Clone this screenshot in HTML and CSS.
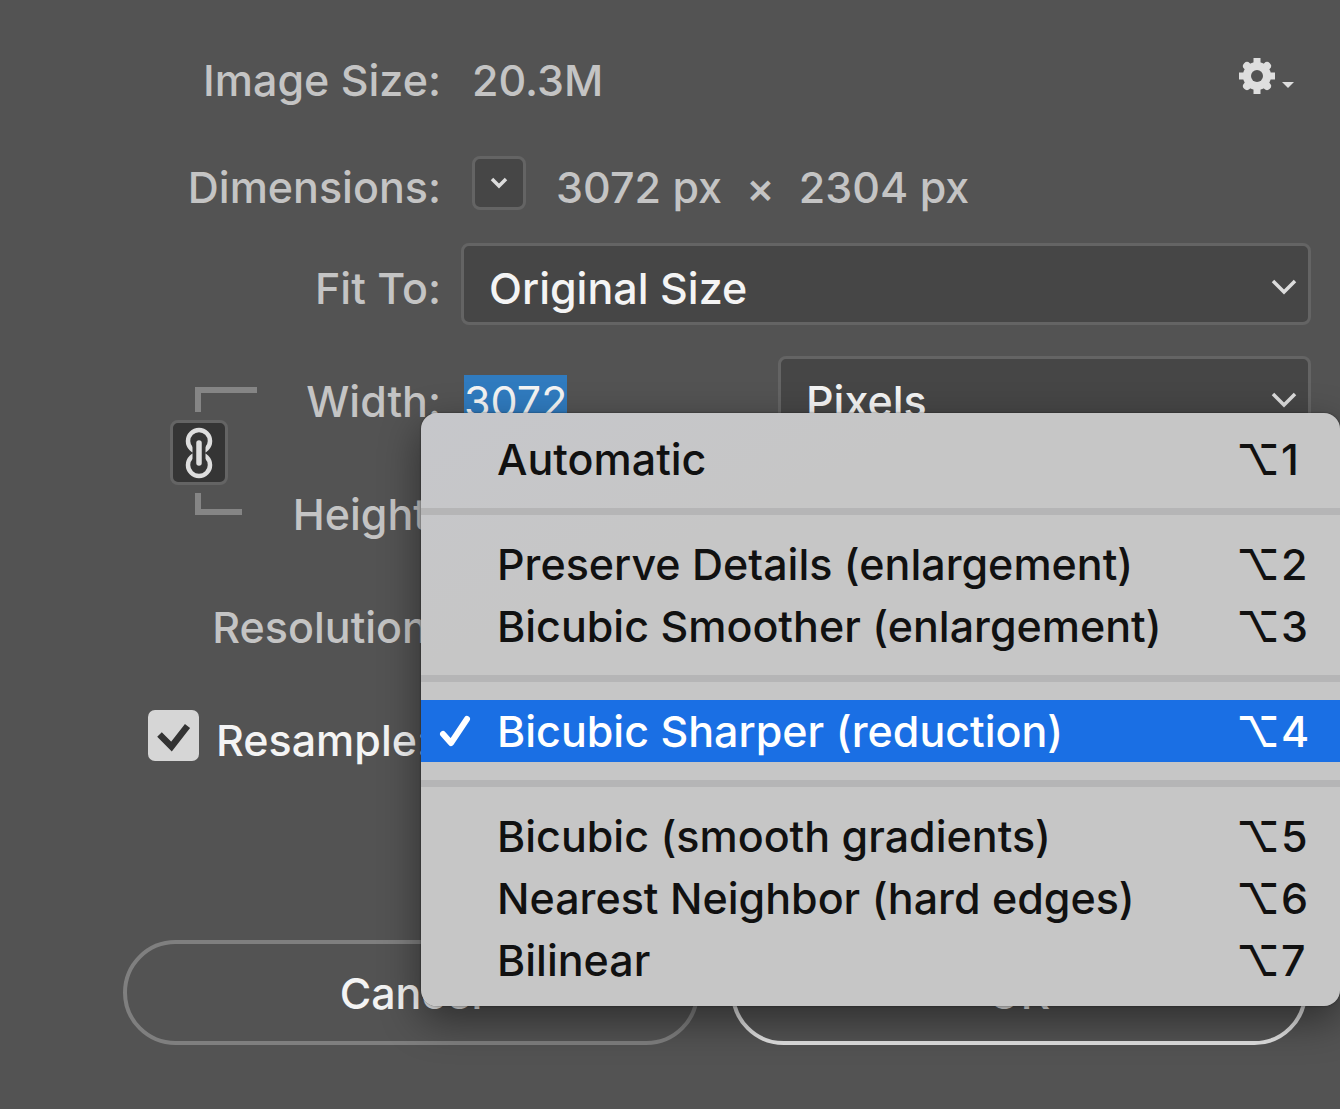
FILE: index.html
```html
<!DOCTYPE html>
<html lang="en">

<head>
    <meta charset="UTF-8">
    <meta name="viewport" content="width=device-width, initial-scale=1.0">
    <title>Image Size</title>
    <link rel="stylesheet" href="styles.css">
    <script src="script.js" defer></script>
</head>

<body>
    <form class="dialog">
        <div class="fields">
            <span class="label">Image Size:</span>
            <div class="control info">
                <span class="value">20.3M</span>
                <button type="button" class="settings" aria-label="Settings">
                    <svg class="gear" viewBox="0 0 38 38" aria-hidden="true">
                        <g stroke="#dedede" stroke-width="7">
                            <path d="M19 1v36M1 19h36" />
                            <path d="M9 9l20 20M29 9L9 29" stroke-width="8" stroke-linecap="round" />
                        </g>
                        <circle cx="19" cy="19" r="14" fill="#dedede" />
                        <circle cx="19" cy="19" r="6" fill="#535353" />
                    </svg>
                    <svg class="arrow" viewBox="0 0 12 6" aria-hidden="true">
                        <path d="M0 0h12L6 6z" fill="#dedede" />
                    </svg>
                </button>
            </div>

            <span class="label">Dimensions:</span>
            <div class="control info">
                <button type="button" class="dimension-unit" aria-label="Dimension units">
                    <svg viewBox="0 0 18 12" aria-hidden="true">
                        <path d="M2 2l7 7 7-7" fill="none" stroke="#dcdcdc" stroke-width="3.500" />
                    </svg>
                </button>
                <span class="value size">3072 px</span>
                <span class="value times">×</span>
                <span class="value">2304 px</span>
            </div>

            <label class="label" for="fit">Fit To:</label>
            <div class="control">
                <div class="select">
                    <select id="fit">
                        <option>Original Size</option>
                    </select>
                    <svg viewBox="0 0 26 16" aria-hidden="true">
                        <path d="M2 2l11 11L24 2" fill="none" stroke="#dcdcdc" stroke-width="3.500" />
                    </svg>
                </div>
            </div>

            <div class="link">
                <span class="bracket top"></span>
                <button type="button" class="chain" aria-label="Constrain proportions" aria-pressed="true">
                    <svg viewBox="0 0 28 54" aria-hidden="true">
                        <g fill="none" stroke="#dedede" stroke-width="4.500">
                            <circle cx="14" cy="15" r="11" />
                            <circle cx="14" cy="39" r="11" />
                            <path d="M14 18v18" stroke="#353535" stroke-width="13" stroke-linecap="round" />
                            <path d="M14 17v20" stroke-width="5.500" stroke-linecap="round" />
                        </g>
                    </svg>
                </button>
                <span class="bracket bottom"></span>
            </div>

            <label class="label short" for="width">Width:</label>
            <div class="control pair">
                <input type="text" id="width" value="3072" autofocus>
                <div class="select">
                    <select aria-label="Width unit">
                        <option>Pixels</option>
                    </select>
                    <svg viewBox="0 0 26 16" aria-hidden="true">
                        <path d="M2 2l11 11L24 2" fill="none" stroke="#dcdcdc" stroke-width="3.500" />
                    </svg>
                </div>
            </div>

            <label class="label short" for="height">Height:</label>
            <div class="control pair">
                <input type="text" id="height">
            </div>

            <label class="label" for="resolution">Resolution:</label>
            <div class="control pair">
                <input type="text" id="resolution">
            </div>

            <label class="resample">
                <input type="checkbox" checked>
                <span>Resample:</span>
            </label>
            <div class="control method">
                <div class="menu" role="menu">
                    <button type="button" role="menuitemradio"><span>Automatic</span><kbd><i>⌥</i>1</kbd></button>
                    <hr>
                    <button type="button" role="menuitemradio"><span>Preserve Details (enlargement)</span><kbd><i>⌥</i>2</kbd></button>
                    <button type="button" role="menuitemradio"><span>Bicubic Smoother (enlargement)</span><kbd><i>⌥</i>3</kbd></button>
                    <hr>
                    <button type="button" role="menuitemradio" class="selected" aria-checked="true">
                        <svg viewBox="0 0 32 32" aria-hidden="true">
                            <path d="M4 19l8 9L28 4" fill="none" stroke="#fff" stroke-width="6" stroke-linecap="round" stroke-linejoin="round" />
                        </svg>
                        <span>Bicubic Sharper (reduction)</span><kbd><i>⌥</i>4</kbd>
                    </button>
                    <hr>
                    <button type="button" role="menuitemradio"><span>Bicubic (smooth gradients)</span><kbd><i>⌥</i>5</kbd></button>
                    <button type="button" role="menuitemradio"><span>Nearest Neighbor (hard edges)</span><kbd><i>⌥</i>6</kbd></button>
                    <button type="button" role="menuitemradio"><span>Bilinear</span><kbd><i>⌥</i>7</kbd></button>
                </div>
            </div>
        </div>

        <div class="actions">
            <button type="button" class="cancel">Cancel</button>
            <button type="submit" class="ok">OK</button>
        </div>
    </form>
</body>

</html>
```
FILE: styles.css
```css
* {
    margin: 0;
    padding: 0;
    box-sizing: border-box;
}

body {
    min-height: 100vh;
    background: #535353;
    color: #c4c4c4;
    font-family: Inter, "Liberation Sans", sans-serif;
    font-size: 43px;
    font-weight: 500;
    overflow-x: hidden;
}

button,
input,
select {
    font: inherit;
    color: inherit;
    border: none;
    outline: none;
    background: none;
}

svg {
    display: block;
    flex: none;
}

.dialog {
    padding: 14px 29px 60px 0;
}

/* link column, label column, control column */
.fields {
    display: grid;
    grid-template-columns: 260px 181px 1fr;
    grid-template-rows: 124px 89px;
    grid-auto-rows: 113px;
    align-items: center;
}

.label {
    grid-column: 1 / 3;
    padding-top: 8px;
    text-align: right;
    white-space: nowrap;
}

.label.short {
    grid-column: 2;
}

.control {
    grid-column: 3;
    display: flex;
    align-items: center;
    margin-left: 20px;
}

.info {
    padding-left: 11px;
}

.value {
    padding-top: 8px;
    white-space: nowrap;
}

.size {
    margin-left: 30px;
}

.times {
    margin: 0 24px;
}

.settings {
    display: flex;
    align-items: center;
    gap: 6px;
    margin-left: auto;
    margin-right: 17px;
}

.gear {
    width: 38px;
    height: 38px;
}

.arrow {
    width: 12px;
    height: 6px;
    margin-top: 18px;
}

.dimension-unit {
    display: flex;
    align-items: center;
    justify-content: center;
    width: 54px;
    height: 54px;
    border: 3px solid #646464;
    border-radius: 8px;
    background: #464646;
}

.dimension-unit svg {
    width: 18px;
    height: 12px;
}

.select {
    flex: 1;
    display: grid;
    align-items: center;
}

.select select {
    grid-area: 1 / 1;
    width: 100%;
    height: 82px;
    padding: 8px 25px 0;
    border: 3px solid #646464;
    border-radius: 8px;
    background: #464646;
    color: #f4f4f4;
    appearance: none;
}

.select svg {
    grid-area: 1 / 1;
    justify-self: end;
    width: 26px;
    height: 16px;
    margin-top: 6px;
    margin-right: 14px;
    pointer-events: none;
}

.pair {
    gap: 16px;
}

.pair input {
    width: 301px;
    height: 82px;
    padding: 8px 3px 0;
    color: #f4f4f4;
    font-weight: 400;
}

.pair input::selection {
    background: #307bbf;
    color: #f4f4f4;
}

.link {
    grid-column: 1;
    grid-row: 4 / 6;
    display: flex;
    flex-direction: column;
    gap: 8px;
    margin-left: 170px;
    padding-bottom: 4px;
}

.bracket {
    margin-left: 25px;
    border-left: 6px solid #858585;
}

.bracket.top {
    width: 62px;
    height: 25px;
    border-top: 6px solid #858585;
}

.bracket.bottom {
    width: 47px;
    height: 22px;
    border-bottom: 6px solid #858585;
}

.chain {
    display: flex;
    align-items: center;
    justify-content: center;
    width: 58px;
    height: 65px;
    border: 3px solid #646464;
    border-radius: 8px;
    background: #353535;
}

.chain svg {
    width: 28px;
    height: 54px;
}

.resample {
    grid-column: 1 / 3;
    display: flex;
    align-items: center;
    gap: 17px;
    margin-left: 148px;
    color: #f4f4f4;
    white-space: nowrap;
}

.resample span {
    padding-top: 8px;
}

.resample input {
    flex: none;
    width: 51px;
    height: 51px;
    border-radius: 7px;
    background: #d6d6d6;
    appearance: none;
}

.resample input:checked {
    background: #d6d6d6 url("data:image/svg+xml,%3Csvg xmlns='http://www.w3.org/2000/svg' viewBox='0 0 51 51'%3E%3Cpath d='M11.500 24.500L23.500 36.500L39.500 16' fill='none' stroke='%23333' stroke-width='6.500'/%3E%3C/svg%3E");
}

.method {
    position: relative;
    height: 82px;
}

/* pop-up list, opened so the current method sits over its own row */
.menu {
    position: absolute;
    top: -282px;
    left: -40px;
    right: -29px;
    padding: 15px 0;
    border-radius: 16px;
    background: linear-gradient(155deg, #c6c7cb, #c6c6c6 25%);
    color: #111;
    font-weight: 450;
    box-shadow: 0 14px 40px rgba(0, 0, 0, 0.45), 0 0 2px rgba(0, 0, 0, 0.5);
}

.menu button {
    display: flex;
    align-items: center;
    width: 100%;
    height: 62px;
    padding-left: 76px;
    text-align: left;
    white-space: nowrap;
}

.menu button svg {
    width: 32px;
    height: 32px;
    margin-left: -58px;
    margin-right: 26px;
}

.menu kbd {
    display: flex;
    width: 104px;
    margin-left: auto;
    font: inherit;
}

.menu kbd i {
    width: 45px;
    font-style: normal;
}

.menu .selected {
    background: #1a6fe4;
    color: #fff;
    font-weight: 500;
}

.menu hr {
    height: 7px;
    margin: 18px 0;
    border: none;
    background: #b5b5b6;
}

.actions {
    display: flex;
    gap: 32px;
    margin: 148px 4px 0 123px;
}

.actions button {
    flex: 1;
    height: 105px;
    border: 4px solid #7f7f7f;
    border-radius: 53px;
    color: #f4f4f4;
}

.actions .ok {
    border-color: #e0e0e0;
}
```
FILE: script.js
```js
const widthField = document.querySelector("#width");

widthField.focus();
widthField.select();
```
